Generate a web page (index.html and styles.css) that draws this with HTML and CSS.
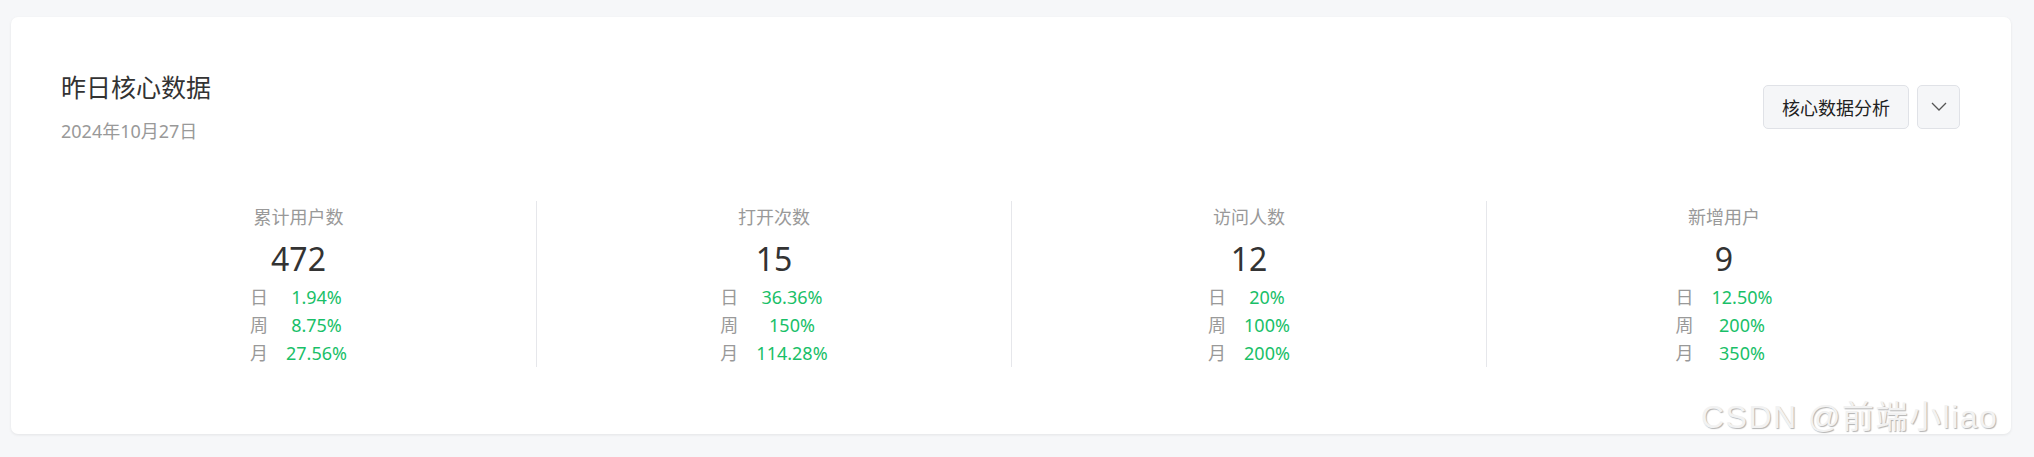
FILE: index.html
```html
<!DOCTYPE html>
<html lang="zh-CN">
<head>
<meta charset="utf-8">
<title>昨日核心数据</title>
<link rel="stylesheet" href="styles.css">
</head>
<body>
<div class="page">
  <section class="card">
    <header class="card-head">
      <div class="head-text">
        <h1 class="title">昨日核心数据</h1>
        <div class="date">2024年10月27日</div>
      </div>
      <div class="actions">
        <button class="btn">核心数据分析</button>
        <button class="btn btn-icon" aria-label="更多">
          <svg width="16" height="9" viewBox="0 0 16 9"><path d="M1 1 L8 8 L15 1" fill="none" stroke="#555" stroke-width="1.3"/></svg>
        </button>
      </div>
    </header>
    <div class="stats">
      <div class="stat">
        <div class="stat-label">累计用户数</div>
        <div class="stat-num">472</div>
        <div class="rates">
          <span class="rk">日</span><span class="rv">1.94%</span>
          <span class="rk">周</span><span class="rv">8.75%</span>
          <span class="rk">月</span><span class="rv">27.56%</span>
        </div>
      </div>
      <div class="stat">
        <div class="stat-label">打开次数</div>
        <div class="stat-num">15</div>
        <div class="rates">
          <span class="rk">日</span><span class="rv">36.36%</span>
          <span class="rk">周</span><span class="rv">150%</span>
          <span class="rk">月</span><span class="rv">114.28%</span>
        </div>
      </div>
      <div class="stat">
        <div class="stat-label">访问人数</div>
        <div class="stat-num">12</div>
        <div class="rates">
          <span class="rk">日</span><span class="rv">20%</span>
          <span class="rk">周</span><span class="rv">100%</span>
          <span class="rk">月</span><span class="rv">200%</span>
        </div>
      </div>
      <div class="stat">
        <div class="stat-label">新增用户</div>
        <div class="stat-num">9</div>
        <div class="rates">
          <span class="rk">日</span><span class="rv">12.50%</span>
          <span class="rk">周</span><span class="rv">200%</span>
          <span class="rk">月</span><span class="rv">350%</span>
        </div>
      </div>
    </div>
  </section>
  <div class="watermark">CSDN @前端小liao</div>
</div>
</body>
</html>
```

FILE: styles.css
```css
html, body {
  margin: 0;
  padding: 0;
  background: #f6f7f9;
  font-family: "Noto Sans", "Noto Sans CJK SC", sans-serif;
  color: #333;
}

.page {
  position: relative;
  height: 457px;
  padding: 17px 23px 0 11px;
  box-sizing: border-box;
}

.card {
  background: #fff;
  border-radius: 7px;
  box-shadow: 0 1px 3px rgba(0, 0, 0, 0.08);
  padding: 53px 50px 67px 50px;
}

.card-head {
  display: flex;
  justify-content: space-between;
  align-items: center;
}

.title {
  margin: 0;
  font-size: 25px;
  font-weight: 400;
  line-height: 34px;
  color: #333;
}

.date {
  margin-top: 15px;
  font-size: 18px;
  line-height: 24px;
  color: #999;
}

.actions {
  display: flex;
  gap: 8px;
  margin-right: 1px;
}

.btn {
  height: 44px;
  padding: 0 18px;
  border: 1px solid #e0e2e7;
  border-radius: 5px;
  background: #f5f6f8;
  font-family: inherit;
  font-size: 18px;
  color: #222;
  display: flex;
  align-items: center;
  justify-content: center;
}

.btn-icon {
  width: 43px;
  padding: 0;
}

.stats {
  display: grid;
  grid-template-columns: repeat(4, 1fr);
  margin-top: 58px;
}

.stat {
  display: flex;
  flex-direction: column;
  align-items: center;
  padding-top: 2px;
}

.stat + .stat {
  border-left: 1px solid #e6e7eb;
}

.stat-label {
  font-size: 18px;
  line-height: 28px;
  color: #999;
}

.stat-num {
  margin-top: 4px;
  font-size: 32px;
  line-height: 48px;
  color: #333;
}

.rates {
  display: grid;
  grid-template-columns: auto auto;
  column-gap: 18px;
  font-size: 18px;
  line-height: 28px;
}

.rk {
  color: #999;
  text-align: center;
}

.rv {
  color: #19c068;
  text-align: center;
}

.watermark {
  position: absolute;
  left: 1701px;
  top: 391px;
  font-family: "Liberation Sans", "Noto Sans CJK SC", sans-serif;
  font-size: 32px;
  letter-spacing: 1.5px;
  color: #f2f2f2;
  text-shadow: 1px 1px 1px rgba(0, 0, 0, 0.3);
  white-space: nowrap;
}
```
